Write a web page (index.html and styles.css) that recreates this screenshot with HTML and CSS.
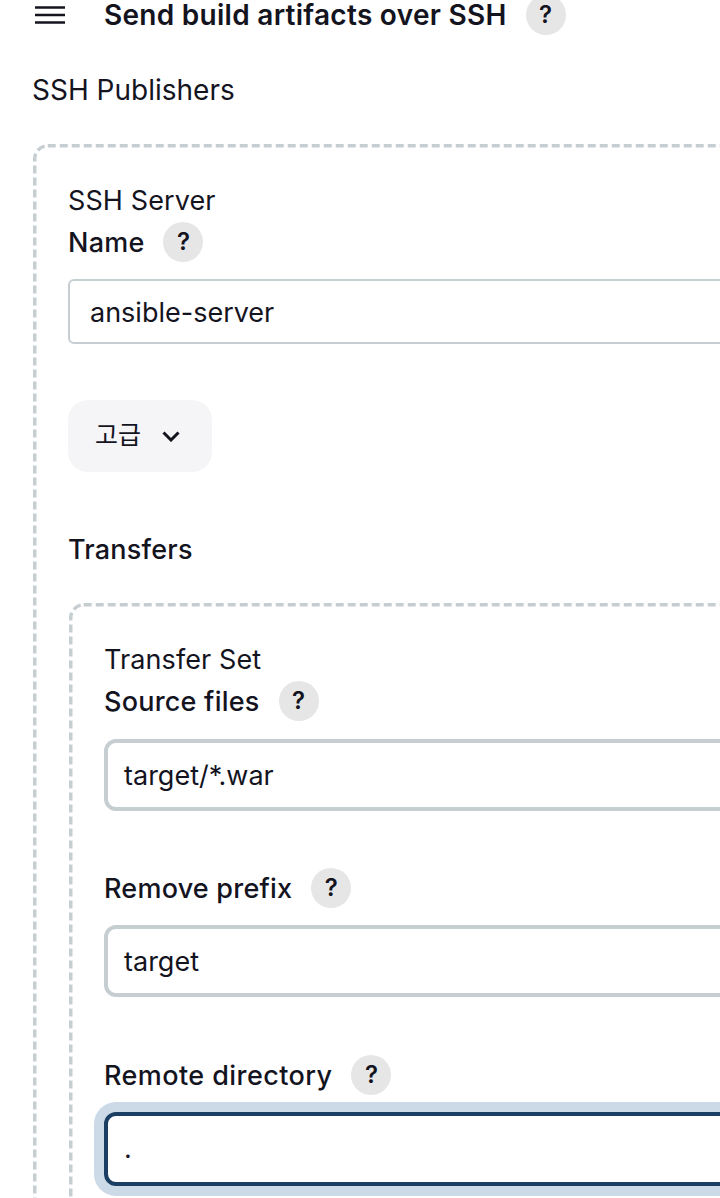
FILE: index.html
```html
<!DOCTYPE html>
<html lang="ko">
<head>
<meta charset="utf-8">
<title>Send build artifacts over SSH</title>
<link rel="stylesheet" href="styles.css">
</head>
<body>
<main class="page">
  <header class="head">
    <svg class="handle" width="30" height="18" viewBox="0 0 30 18" aria-hidden="true"><path d="M0 1.5h30M0 9h30M0 16.500h30" fill="none" stroke="#14141f" stroke-width="2.400"/></svg>
    <h1 class="title">Send build artifacts over SSH</h1>
    <span class="help">?</span>
  </header>
  <div class="section-label">SSH Publishers</div>
  <section class="box outer">
    <svg class="dash" aria-hidden="true"><rect class="dash-line"/></svg>
    <div class="box-title">SSH Server</div>
    <div class="label-row"><label class="label">Name</label><span class="help">?</span></div>
    <div class="control thin">ansible-server</div>
    <button class="advanced" type="button"><span class="advanced-text">고급</span>
      <svg width="18" height="11" viewBox="0 0 18 11" aria-hidden="true"><path d="M1.500 1.500 9 9l7.500-7.500" fill="none" stroke="#14141f" stroke-width="3"/></svg>
    </button>
    <div class="transfers-label">Transfers</div>
    <section class="box inner">
      <svg class="dash" aria-hidden="true"><rect class="dash-line"/></svg>
      <div class="box-title">Transfer Set</div>
      <div class="label-row first"><label class="label">Source files</label><span class="help">?</span></div>
      <div class="control">target/*.war</div>
      <div class="label-row spaced"><label class="label">Remove prefix</label><span class="help">?</span></div>
      <div class="control">target</div>
      <div class="label-row spaced-wide"><label class="label wide">Remote directory</label><span class="help">?</span></div>
      <div class="control focused">.</div>
    </section>
  </section>
</main>
</body>
</html>
```
FILE: styles.css
```css
html, body {
  margin: 0;
  padding: 0;
  height: 100%;
  overflow: hidden;
  background: #fff;
}
.page {
  width: 900px;
  height: 1198px;
  overflow: hidden;
  padding: 0 0 0 33px;
  box-sizing: border-box;
  font-family: Inter, "Noto Sans CJK KR", sans-serif;
  font-size: 27px;
  line-height: 36px;
  color: #14141f;
}
.head {
  display: flex;
  align-items: center;
  height: 40px;
  margin-top: -5px;
  padding-left: 2px;
}
.handle { flex: none; margin-right: 39px; }
.title {
  margin: 0 19px 0 0;
  font-size: 28px;
  font-weight: 600;
  line-height: 30px;
  letter-spacing: 0.28px;
}
.help {
  flex: none;
  width: 40px;
  height: 40px;
  border-radius: 50%;
  background: #e6e6e7;
  font-size: 24px;
  font-weight: 600;
  line-height: 40px;
  text-align: center;
}
.section-label { margin-top: 37px; margin-left: -1px; font-size: 28px; }
.box {
  position: relative;
  padding: 39px 0 0 35px;
}
.dash {
  position: absolute;
  top: 0;
  left: 0;
  width: 100%;
  height: 100%;
}
.dash-line {
  x: 1.750px;
  y: 1.750px;
  width: calc(100% - 3.500px);
  height: calc(100% - 3.500px);
  rx: 13px;
  fill: none;
  stroke: #c6ced2;
  stroke-width: 3.500px;
  stroke-dasharray: 8px 4px;
}
.outer { margin-top: 36px; height: 1200px; }
.box-title { position: relative; height: 36px; letter-spacing: 0.1px; }
.label-row {
  position: relative;
  display: flex;
  align-items: center;
  gap: 19px;
  height: 40px;
  margin-top: 3px;
  margin-bottom: 17px;
}
.first { margin-bottom: 18px; }
.spaced { margin-top: 57px; }
.spaced-wide { margin-top: 58px; }
.label { padding-top: 2px; font-weight: 500; letter-spacing: 0.22px; }
.wide { letter-spacing: 0.42px; }
.control {
  position: relative;
  height: 72px;
  box-sizing: border-box;
  border: 4px solid #c6ced2;
  border-radius: 12px;
  padding-left: 16px;
  line-height: 66px;
  background: #fff;
}
.thin {
  height: 65px;
  border-width: 2px;
  border-radius: 6px;
  padding-left: 20px;
  line-height: 63px;
}
.focused {
  height: 74px;
  border-color: #1b3f63;
  box-shadow: 0 0 0 10px #ccd9e6;
  line-height: 66px;
}
.advanced {
  position: relative;
  display: flex;
  align-items: center;
  gap: 21px;
  width: 144px;
  height: 72px;
  margin-top: 56px;
  padding: 0 0 0 27px;
  border: 0;
  border-radius: 20px;
  background: #f5f5f7;
  color: #14141f;
  font: inherit;
  font-size: 25px;
}
.advanced-text { margin-top: -2px; }
.transfers-label { position: relative; margin-top: 60px; font-weight: 500; letter-spacing: 0.2px; }
.inner { margin-top: 35px; margin-left: 1px; height: 900px; }
```
